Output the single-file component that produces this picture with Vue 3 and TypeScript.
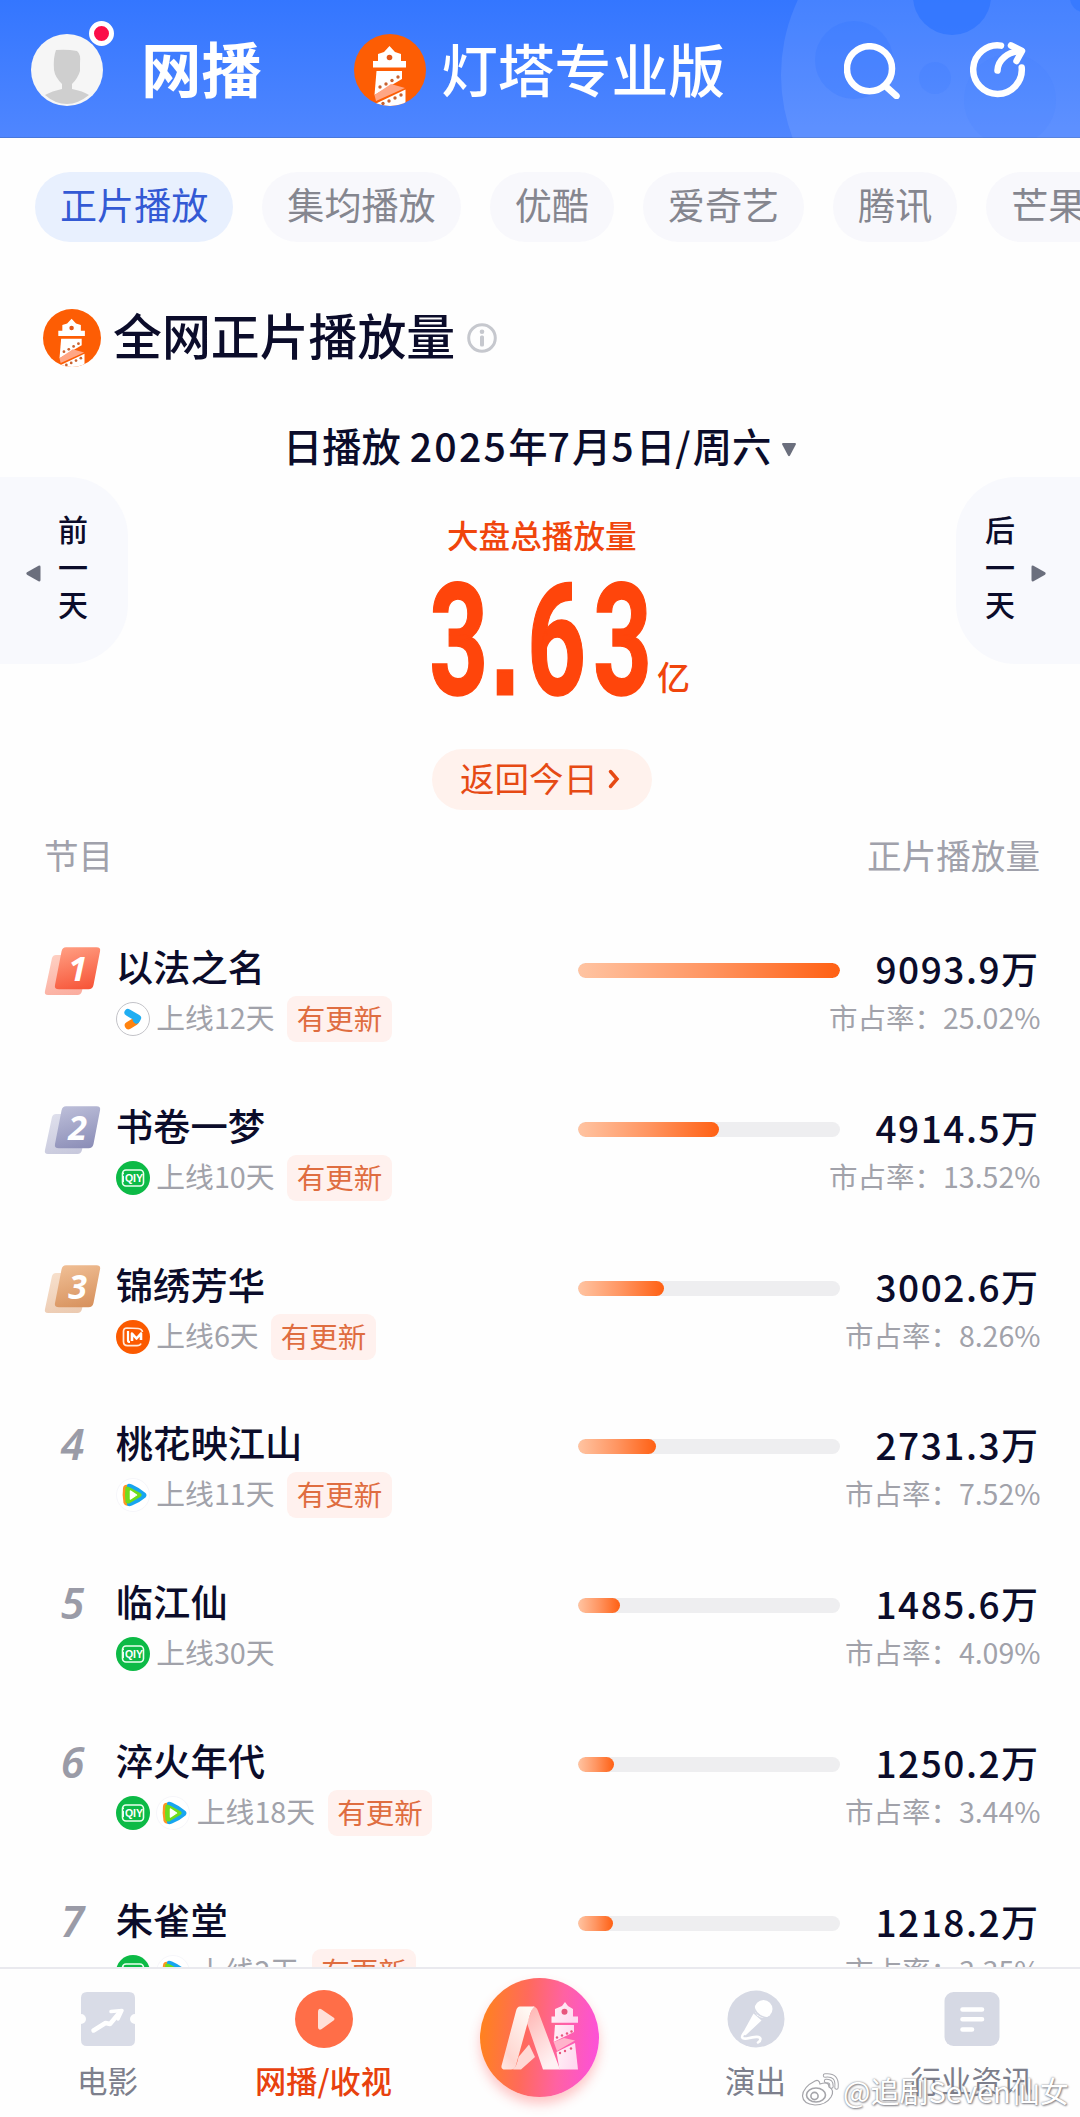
<script setup lang="ts">
import { ref, computed } from 'vue'

type Platform = 'youku' | 'iqiyi' | 'mango' | 'tencent'

interface Program {
  rank: number;
  name: string;
  platforms: Platform[];
  days: number;
  updated: boolean;
  plays: number;
  share: string;
}

const tabs = ['正片播放', '集均播放', '优酷', '爱奇艺', '腾讯', '芒果TV']
const activeTab = ref('正片播放')

const programs = ref<Program[]>([
  { rank: 1, name: '以法之名', platforms: ['youku'], days: 12, updated: true, plays: 9093.9, share: '25.02%' },
  { rank: 2, name: '书卷一梦', platforms: ['iqiyi'], days: 10, updated: true, plays: 4914.5, share: '13.52%' },
  { rank: 3, name: '锦绣芳华', platforms: ['mango'], days: 6, updated: true, plays: 3002.6, share: '8.26%' },
  { rank: 4, name: '桃花映江山', platforms: ['tencent'], days: 11, updated: true, plays: 2731.3, share: '7.52%' },
  { rank: 5, name: '临江仙', platforms: ['iqiyi'], days: 30, updated: false, plays: 1485.6, share: '4.09%' },
  { rank: 6, name: '淬火年代', platforms: ['iqiyi', 'tencent'], days: 18, updated: true, plays: 1250.2, share: '3.44%' },
  { rank: 7, name: '朱雀堂', platforms: ['iqiyi', 'tencent'], days: 2, updated: true, plays: 1218.2, share: '3.35%' },
])

const maxPlays = computed(() => Math.max(...programs.value.map((p) => p.plays)))

function getBarWidth(plays: number) {
  return (plays / maxPlays.value) * 100 + '%'
}

const medals = [
  { id: 1, from: '#ff9c80', to: '#f7573a' },
  { id: 2, from: '#bbbdd8', to: '#8d8fb8' },
  { id: 3, from: '#efbd93', to: '#d8935f' },
]
</script>

<template>
  <div class="page">
    <!-- Shared symbols -->
    <svg class="defs" width="0" height="0" aria-hidden="true">
      <defs>
        <clipPath id="logo-clip"><circle cx="36" cy="36" r="36" /></clipPath>
        <linearGradient v-for="m in medals" :id="'medal-' + m.id" :key="m.id" x1="0.3" y1="0" x2="0.6" y2="1">
          <stop offset="0" :stop-color="m.from" />
          <stop offset="1" :stop-color="m.to" />
        </linearGradient>
        <symbol id="lighthouse" viewBox="0 0 72 72">
          <g clip-path="url(#logo-clip)">
            <rect width="72" height="72" fill="#fd5d04" />
            <path d="M35.5 12 L41 18 L47 20 V27 H52 V33.500 H19 V27 H24 V20 L30 18 Z" fill="#fff" />
            <circle cx="35.500" cy="23.500" r="2.800" fill="#e2571a" />
            <path d="M22.500 37 H48 V45 L20.500 61 Z" fill="#fff" />
            <path d="M20.500 61 L37 50 L51 54 L22 67 Z" fill="#ffa685" />
            <path d="M51.500 55.500 V72 H20 L22 69.500 Z" fill="#fff" />
            <g fill="#c9622f">
              <circle cx="26" cy="53" r="1.700" /><circle cx="32" cy="50" r="1.700" />
              <circle cx="38" cy="46.500" r="1.700" /><circle cx="44" cy="43" r="1.700" />
              <circle cx="29" cy="69.500" r="1.700" /><circle cx="35" cy="67" r="1.700" />
              <circle cx="41" cy="64" r="1.700" /><circle cx="47" cy="61" r="1.700" />
            </g>
          </g>
        </symbol>
      </defs>
    </svg>

    <!-- Header -->
    <header class="top-bar">
      <svg class="top-deco" viewBox="0 0 300 138">
        <circle cx="177" cy="75" r="176" fill="#fff" opacity="0.09" />
        <g fill="#2f74ff">
          <circle cx="74" cy="60" r="39" opacity="0.25" />
          <circle cx="172" cy="-4" r="39" opacity="0.75" />
          <circle cx="155" cy="78" r="16" opacity="0.15" />
          <circle cx="230" cy="100" r="46" opacity="0.07" />
          <circle cx="304" cy="-2" r="14" opacity="0.6" />
        </g>
      </svg>
      <div class="avatar">
        <svg viewBox="0 0 72 72">
          <circle cx="36" cy="36" r="36" fill="#f6f6f6" />
          <path d="M25 16 Q36 15 46 17 Q50 20 49 29 L49 37 Q47 44 41 50 V55 Q52 57 58 61 Q47 70 36 70 Q24 70 14 61 Q21 57 31 55 V50 Q24 43 23 36 Q22 24 25 16 Z" fill="#cfcfcf" />
        </svg>
        <i class="avatar-dot"></i>
      </div>
      <h1 class="top-title">网播</h1>
      <svg class="brand-logo"><use href="#lighthouse" /></svg>
      <span class="brand-name">灯塔专业版</span>
      <svg class="top-icon icon-search" viewBox="0 0 56 56">
        <circle cx="25.500" cy="25.700" r="22.500" />
        <path d="M42.500 44 L52.500 53" />
      </svg>
      <svg class="top-icon icon-share" viewBox="0 0 56 56">
        <path d="M31 3.600 A24.300 24.300 0 1 0 51.700 25.500" />
        <path d="M27.500 28.500 C28 18 37 10 51 9" />
        <path d="M41 3.500 L52 9 L46.500 19" />
      </svg>
    </header>

    <!-- Tabs -->
    <nav class="tabs">
      <button v-for="tab in tabs" :key="tab" class="tab" :class="{ 'tab-active': tab === activeTab }" @click="activeTab = tab">{{ tab }}</button>
    </nav>

    <!-- Title -->
    <div class="section-title">
      <svg class="section-logo"><use href="#lighthouse" /></svg>
      <h2>全网正片播放量</h2>
      <svg class="info-icon" viewBox="0 0 30 30">
        <circle cx="15" cy="15" r="13.300" fill="none" stroke="#c6c8ce" stroke-width="3" />
        <circle cx="15" cy="8.800" r="2.300" fill="#c6c8ce" />
        <rect x="13" y="12.500" width="4" height="11" rx="1.500" fill="#c6c8ce" />
      </svg>
    </div>

    <div class="date-line">
      <span>日播放 <b>2025</b>年<b>7</b>月<b>5</b>日<b>/</b>周六</span>
      <svg class="date-arrow" viewBox="0 0 16 15"><path d="M2 1 H14 Q15.500 1 14.800 2.500 L9 13.500 Q8 15 7 13.500 L1.200 2.500 Q0.500 1 2 1 Z" /></svg>
    </div>

    <!-- Total -->
    <section class="stage">
      <button class="day-btn day-prev">
        <svg viewBox="0 0 15 17"><path d="M1 7.300 L12.500 0.800 Q14.500 0 14.500 2 V15 Q14.500 17 12.500 16.200 L1 9.700 Q-0.300 8.500 1 7.300 Z" /></svg>
        <span>前<br>一<br>天</span>
      </button>
      <div class="total">
        <div class="total-label">大盘总播放量</div>
        <div class="total-value">
          <svg class="total-number" width="222" height="130" viewBox="0 0 222 130">
            <text transform="scale(0.66 1)" y="120"><tspan x="-4">3</tspan><tspan x="89" class="dot">.</tspan><tspan x="144 244">63</tspan></text>
          </svg>
          <span>亿</span>
        </div>
        <button class="today-btn">
          返回今日
          <svg viewBox="0 0 12 20"><path d="M2.500 2.500 L9 10 L2.500 17.500" /></svg>
        </button>
      </div>
      <button class="day-btn day-next">
        <span>后<br>一<br>天</span>
        <svg viewBox="0 0 15 17"><path d="M14 7.300 L2.500 0.800 Q0.500 0 0.500 2 V15 Q0.500 17 2.500 16.200 L14 9.700 Q15.300 8.500 14 7.300 Z" /></svg>
      </button>
    </section>

    <!-- List -->
    <div class="list-head">
      <span>节目</span>
      <span>正片播放量</span>
    </div>
    <main class="list">
      <div v-for="p in programs" :key="p.rank" class="row">
        <div class="rank">
          <svg v-if="p.rank <= 3" viewBox="0 0 57 50">
            <path d="M12 9 H42 Q45 9 44.500 12 L38 45 Q37 49 33.500 49 H4 Q0 49 1 45 L8 12 Q9 9 12 9 Z" :fill="'url(#medal-' + p.rank + ')'" opacity="0.48" />
            <path d="M22 1.300 H52.500 Q57 1.300 56 5.500 L49.500 39 Q48.500 43.300 44.500 43.300 H15 Q10 43.300 11 39 L17.500 5.500 Q18.500 1.300 22 1.300 Z" :fill="'url(#medal-' + p.rank + ')'" />
            <text x="33.500" y="35" text-anchor="middle">{{ p.rank }}</text>
          </svg>
          <span v-else>{{ p.rank }}</span>
        </div>
        <div class="info">
          <div class="name">{{ p.name }}</div>
          <div class="meta">
            <template v-for="pf in p.platforms" :key="pf">
              <svg v-if="pf === 'youku'" class="platform" viewBox="0 0 34 34">
                <circle cx="17" cy="17" r="16.500" fill="#fff" stroke="#c3c3c8" />
                <path d="M12.500 23.500 L19 19.500" stroke="#ff8310" stroke-width="7.500" stroke-linecap="round" />
                <path d="M12 10.500 L21.500 16 L20.500 18" fill="none" stroke="#20aef2" stroke-width="7.200" stroke-linecap="round" stroke-linejoin="round" />
              </svg>
              <svg v-else-if="pf === 'iqiyi'" class="platform" viewBox="0 0 34 34">
                <circle cx="17" cy="17" r="17" fill="#0cba46" />
                <rect x="6.500" y="9" width="21" height="16" rx="3.500" fill="none" stroke="#e9ffee" stroke-width="1.600" />
                <text x="18" y="21.300" text-anchor="middle" class="iqiyi-text">QIY</text>
                <path d="M7 11.500 V13 M7 15 V21" stroke="#e9ffee" stroke-width="2" />
              </svg>
              <svg v-else-if="pf === 'mango'" class="platform" viewBox="0 0 34 34">
                <circle cx="17" cy="17" r="17" fill="#fb5a00" />
                <path d="M26.500 12 Q26 9 22 8.500 L11 8 Q7.500 8 7.500 11.500 V21.500 Q7.500 25.500 11.500 25.700 H21 Q24 25.700 25 23.500" fill="none" stroke="#ffe9da" stroke-width="1.700" />
                <path d="M12 11 V20.500 Q12 22 14 22" fill="none" stroke="#fff" stroke-width="2.200" />
                <path d="M16 21 V13.500 L20.500 18.500 L25 13.500 V20" fill="none" stroke="#fff" stroke-width="2.600" stroke-linejoin="round" />
              </svg>
              <svg v-else class="platform" viewBox="0 0 34 34">
                <circle cx="17" cy="17" r="16.500" fill="#fff" stroke="#f6f6fa" />
                <path d="M7 10 Q8 6 12 7 L14 27 Q9 29 7.500 25 Q6 17 7 10 Z" fill="#ff9420" />
                <path d="M11 7 Q12 5 16 6.500 Q24 10 29.500 15 Q31.500 17 29.500 19.500 Q23 25 16 27.500 Q12 29 11 27 Z" fill="#17a5f0" />
                <path d="M9.500 9 Q11 7.500 15 10 L25 15.500 Q26.500 17 25 18.500 L14 25 Q10.500 26.500 9.500 24 Q8.500 17 9.500 9 Z" fill="#6fdc1c" />
                <path d="M14.500 13 L20.500 17 L14.500 21 Z" fill="#fff" stroke="#fff" stroke-width="1.500" stroke-linejoin="round" />
              </svg>
            </template>
            <span class="days">上线{{ p.days }}天</span>
            <span v-if="p.updated" class="badge">有更新</span>
          </div>
        </div>
        <div class="bar"><div class="bar-fill" :style="{ width: getBarWidth(p.plays) }"></div></div>
        <div class="stats">
          <div class="plays"><b>{{ p.plays.toFixed(1) }}</b>万</div>
          <div class="share">市占率：{{ p.share }}</div>
        </div>
      </div>
    </main>

    <!-- Bottom nav -->
    <footer class="nav">
      <div class="nav-item">
        <svg viewBox="0 0 58 58">
          <path d="M8 2 H50 Q56 2 56 8 V24 A5 5 0 0 0 56 34 V50 Q56 56 50 56 H8 Q2 56 2 50 V34 A5 5 0 0 0 2 24 V8 Q2 2 8 2 Z" fill="#d9dce7" />
          <path d="M14.500 40.500 L26.500 33 L31 34 L41 22" class="nav-stroke" stroke-width="4.500" />
          <path d="M32 21.500 L43 20.500 L39 29" class="nav-stroke" stroke-width="3.500" />
        </svg>
        <span>电影</span>
      </div>
      <div class="nav-item nav-active">
        <svg viewBox="0 0 58 58">
          <circle cx="29" cy="29" r="29" fill="#ff6e48" />
          <path d="M25.500 20.500 L38 29 L25.500 38 Q24.500 38.500 24.500 37 V22 Q24.500 20 25.500 20.500 Z" fill="#ffe0d8" stroke="#ffe0d8" stroke-width="3" stroke-linejoin="round" />
        </svg>
        <span>网播/收视</span>
      </div>
      <div class="nav-item nav-ai">
        <div class="ai-btn">
          <svg viewBox="0 0 119 119">
            <defs>
              <linearGradient id="ai-left" x1="0" y1="1" x2="0.7" y2="0">
                <stop offset="0" stop-color="#ffe9e4" /><stop offset="0.25" stop-color="#ffd6d0" /><stop offset="1" stop-color="#fff8f3" />
              </linearGradient>
              <linearGradient id="ai-right" x1="0" y1="0" x2="0.5" y2="1">
                <stop offset="0" stop-color="#ffb3b0" /><stop offset="1" stop-color="#fff2f3" />
              </linearGradient>
              <linearGradient id="ai-tower" x1="0" y1="0" x2="1" y2="0.3">
                <stop offset="0" stop-color="#fff2f6" /><stop offset="1" stop-color="#ffd9f0" />
              </linearGradient>
            </defs>
            <path d="M53 28.500 Q56.500 28.500 58 33 L80 91.500 H63 L47 45 Z" fill="url(#ai-right)" />
            <path d="M40 28.500 H54.500 Q51.500 31 49.500 38 L36 87 Q35 91.500 31 91.500 H25 Q20 91.500 22 86 L36 33 Q37 28.500 40 28.500 Z" fill="url(#ai-left)" />
            <path d="M49 66.500 L55 79 L41 91.500 H33 Q37 88 38.500 79 Z" fill="#ffd8d4" />
            <path d="M85 24 L88 28 L93 31 V38.500 H98 V44.700 H71.500 V38.500 H75 V31 L82 28 Z" fill="url(#ai-tower)" />
            <circle cx="84.500" cy="33.700" r="3" fill="#e8567e" />
            <path d="M75 47 H94 V54 L73.700 64 Z" fill="url(#ai-tower)" />
            <path d="M73.700 64 L84 60 L95 62.500 L77 73 Z" fill="#ffb3cb" />
            <path d="M76.500 74 L95 65 L98 91.500 H79.500 Z" fill="url(#ai-tower)" />
            <g fill="#e8567e">
              <circle cx="77" cy="59.500" r="1.200" /><circle cx="82" cy="57.500" r="1.200" /><circle cx="87" cy="55.500" r="1.200" /><circle cx="91.500" cy="53.500" r="1.200" />
              <circle cx="80" cy="75" r="1.200" /><circle cx="85" cy="73" r="1.200" /><circle cx="91" cy="70.500" r="1.200" />
            </g>
          </svg>
        </div>
      </div>
      <div class="nav-item">
        <svg viewBox="0 0 58 58">
          <circle cx="29" cy="29" r="28.500" fill="#d6d9e4" />
          <circle cx="36.500" cy="19" r="9" fill="#fff" />
          <path d="M26.500 23.500 L34.500 30.500 L19 45 Q17 46 15.500 43.500 Z" fill="#fff" />
          <path d="M26.500 15.500 Q28.500 27 41.500 28" fill="none" stroke="#d6d9e4" stroke-width="1.600" />
          <path d="M17 43 Q12 49.500 20 48.500 Q33 45 33.500 49 Q33.500 51 31 52.500" class="nav-stroke" stroke-width="2.600" />
        </svg>
        <span>演出</span>
      </div>
      <div class="nav-item">
        <svg viewBox="0 0 58 58">
          <rect x="1.500" y="2" width="55" height="54" rx="9" fill="#d6d9e4" />
          <path d="M19.500 19.500 H39 M19.500 29.300 H39 M19.500 39.500 H29" class="nav-stroke" stroke-width="4.600" />
        </svg>
        <span>行业资讯</span>
      </div>
    </footer>

    <!-- Watermark -->
    <div class="watermark">
      <svg viewBox="0 0 40 36">
        <path d="M15 9 Q19 7 20 12 Q29 9 29 15 Q35 18 31 25 Q26 33 15 33 Q3 32 2.500 24 Q3 15 15 9 Z" fill="#fff" stroke="#a5a5aa" stroke-width="1.200" />
        <ellipse cx="16" cy="23" rx="9.500" ry="7" fill="none" stroke="#a5a5aa" stroke-width="1.600" />
        <circle cx="14.500" cy="24" r="3.600" fill="none" stroke="#a5a5aa" stroke-width="1.600" />
        <path d="M25 3.500 Q38 2 36.500 15.500 M26 9 Q32 8.500 31.500 14.500" fill="none" stroke="#a5a5aa" stroke-width="4.400" stroke-linecap="round" />
        <path d="M25 3.500 Q38 2 36.500 15.500 M26 9 Q32 8.500 31.500 14.500" fill="none" stroke="#fff" stroke-width="2.400" stroke-linecap="round" />
      </svg>
      <span>@追剧Seven仙女</span>
    </div>
  </div>
</template>

<style>
body { margin: 0; background: #fefefe; }
</style>

<style scoped>
.page {
  position: relative; width: 1080px; height: 2117px; overflow: hidden;
  display: flex; flex-direction: column; background: #fefefe; color: #0b0c2a;
  font-family: "Noto Sans CJK SC", "Noto Sans", sans-serif;
}
.defs { position: absolute; }
button { border: none; padding: 0; font-family: inherit; color: inherit; cursor: pointer; }
h1, h2 { margin: 0; }
svg { display: block; flex-shrink: 0; }

/* Header */
.top-bar {
  position: relative; height: 138px; flex-shrink: 0; box-sizing: border-box;
  display: flex; align-items: center; padding: 2px 0 0 31px; color: #fff;
  background: linear-gradient(#3476ff, #4f86ff); border-bottom: 1px solid #4878dc;
}
.top-deco { position: absolute; right: 0; top: 0; width: 300px; height: 138px; }
.avatar { position: relative; width: 72px; height: 72px; margin-right: 38px; }
.avatar svg { width: 72px; height: 72px; }
.avatar-dot {
  position: absolute; left: 58px; top: -13px; width: 15px; height: 15px;
  background: #fb0d48; border: 5px solid #fff; border-radius: 50%;
}
.top-title { width: 121px; margin: -5px 92px 0 0; font-size: 60.500px; line-height: 72px; font-weight: 700; white-space: nowrap; }
.brand-logo { width: 72px; height: 72px; margin-right: 15px; }
.brand-name { width: 284px; margin-top: -6px; font-size: 56.800px; line-height: 72px; font-weight: 500; white-space: nowrap; }
.top-icon {
  position: relative; width: 56px; height: 56px; fill: none; stroke: #fff;
  stroke-width: 6.500; stroke-linecap: round; stroke-linejoin: round;
}
.icon-search { margin: 2px 0 0 119px; }
.icon-share { margin: 1px 0 0 70px; }

/* Tabs */
.tabs { display: flex; gap: 29px; padding: 34px 0 0 35px; flex-shrink: 0; }
.tab {
  flex-shrink: 0; height: 70px; padding: 0 25px 6px; border-radius: 35px; white-space: nowrap;
  background: #f8f8fc; color: #85868f; font-size: 37.100px; line-height: 64px;
}
.tab-active { background: #e8f0fe; color: #3359d4; }

/* Title */
.section-title { display: flex; align-items: center; height: 58px; margin-top: 67px; padding-left: 43px; flex-shrink: 0; }
.section-logo { width: 58px; height: 58px; }
.section-title h2 { margin: -9px 12px 0 12px; font-size: 48.900px; line-height: 58px; font-weight: 500; }
.info-icon { width: 30px; height: 30px; margin-top: -1px; }
.date-line {
  display: flex; align-items: center; height: 60px; margin-top: 48px; padding-left: 283px; flex-shrink: 0;
  font-size: 39.300px; line-height: 60px; font-weight: 500; white-space: nowrap;
}
.date-line b { font-weight: 500; letter-spacing: 2.200px; }
.date-arrow { width: 16px; height: 15px; margin: 8px 0 0 10px; fill: #6b6f7d; }

/* Total */
.stage { display: flex; align-items: flex-start; height: 334px; margin-top: 2px; flex-shrink: 0; }
.day-btn {
  display: flex; align-items: center; box-sizing: border-box; height: 187px; background: #f8f9fd;
  font-size: 30px; line-height: 37.500px; font-weight: 500; padding-bottom: 8px;
}
.day-btn svg { width: 15px; height: 17px; margin-top: 13px; fill: #6b6f7d; }
.day-prev { width: 128px; gap: 17px; padding-left: 26px; border-radius: 0 60px 60px 0; }
.day-next { width: 124px; gap: 16px; padding-left: 29px; border-radius: 60px 0 0 60px; }
.total { flex: 1; padding: 35px 0 0 282px; color: #f0450c; }
.total-label { padding-left: 37px; font-size: 31.600px; line-height: 44px; font-weight: 500; white-space: nowrap; }
.total-value { display: flex; align-items: flex-end; margin-top: 18px; padding-left: 22px; }
.total-value span { font-size: 33px; line-height: 40px; margin: 0 0 8px 3px; font-weight: 500; }
.total-number text {
  font-family: Roboto, "Liberation Sans", sans-serif; font-weight: 700; font-size: 156px;
  fill: #ff450b; stroke: #ff450b; stroke-width: 1.500;
}
.total-number .dot { font-family: "Liberation Sans", sans-serif; stroke-width: 3; }
.today-btn {
  display: flex; align-items: center; gap: 10px; box-sizing: border-box; width: 220px; height: 61px;
  margin: 45px 0 0 22px; padding: 0 0 5px 28px; border-radius: 31px; background: #fff2ed; color: #e64a14; font-size: 34.500px;
}
.today-btn svg { width: 12px; height: 20px; margin-top: 3px; fill: none; stroke: #e64a14; stroke-width: 3.500; stroke-linecap: round; }

/* List */
.list-head {
  display: flex; justify-content: space-between; height: 40px; margin-top: 23px; padding: 0 40px 0 44px;
  flex-shrink: 0; font-size: 34.600px; line-height: 40px; color: #a0a1ab;
}
.list { flex: 1; min-height: 0; overflow: hidden; }
.row {
  display: grid; grid-template-columns: 57px 476.500px 262.500px minmax(0, 1fr); height: 158.800px;
  box-sizing: border-box; padding: 72px 41px 0 44px;
}
.rank { font-family: "Noto Sans", "Open Sans", sans-serif; font-weight: 600; font-style: italic; }
.rank svg { width: 57px; height: 50px; }
.rank svg text { font-size: 34px; font-weight: 700; fill: #fff; }
.rank span { display: block; text-align: center; font-size: 43px; line-height: 44px; color: #9a9ba7; }
.info { padding-left: 14.800px; }
.name { font-size: 37.300px; line-height: 42px; font-weight: 500; margin-top: -1px; }
.meta { display: flex; align-items: center; height: 46px; margin-top: 9px; gap: 6.500px; }
.platform { width: 34px; height: 34px; }
.iqiyi-text { font-family: "Liberation Sans", sans-serif; font-weight: 700; font-size: 10.500px; fill: #fff; }
.days { font-size: 28.800px; line-height: 40px; color: #a1a2aa; margin-top: -4px; }
.badge {
  margin-left: 6px; padding: 0 9.500px; height: 46px; border-radius: 9px; box-sizing: border-box;
  background: #fff1ee; color: #df6d40; font-size: 28.500px; line-height: 43px;
}
.bar { height: 15px; margin-top: 17px; border-radius: 8px; background: #eeeef0; overflow: hidden; }
.bar-fill { height: 100%; border-radius: 8px; background: linear-gradient(90deg, #ffc4a2, #ff9561 50%, #ff6013); }
.stats { display: flex; flex-direction: column; align-items: flex-end; white-space: nowrap; }
.plays { font-size: 37px; line-height: 44px; font-weight: 500; margin-right: 1px; }
.plays b { font-weight: 500; letter-spacing: 1.500px; }
.share { font-size: 28.500px; line-height: 40px; margin: 7px -1.500px 0 0; color: #a1a2aa; }

/* Bottom nav */
.nav {
  display: flex; height: 150px; flex-shrink: 0; box-sizing: border-box;
  border-top: 2px solid #e9e9ee; background: #fefefe;
}
.nav-item {
  width: 216px; display: flex; flex-direction: column; align-items: center; box-sizing: border-box;
  padding: 21px 1px 0 0; font-size: 30.500px; line-height: 40px; color: #7d7f8c; white-space: nowrap;
}
.nav-item svg { width: 58px; height: 58px; }
.nav-item span { margin-top: 12px; }
.nav-active { color: #e8410e; font-weight: 500; font-size: 31.200px; }
.nav-stroke { fill: none; stroke: #fff; stroke-linecap: round; stroke-linejoin: round; }
.nav-ai { padding-top: 9px; }
.ai-btn {
  width: 119px; height: 119px; border-radius: 50%; box-shadow: 0 7px 12px rgba(255, 70, 70, 0.3);
  background: linear-gradient(95deg, #ff8120 5%, #ff6a5c 38%, #ff62a2 66%, #fc50dc 98%);
}
.ai-btn svg { width: 119px; height: 119px; }

/* Watermark */
.watermark {
  position: absolute; left: 800px; top: 2070px; display: flex; align-items: center; gap: 3px;
  color: #fff; font-size: 29px; line-height: 40px; white-space: nowrap;
  text-shadow: 0 0 2px #77777d, 1px 1px 2px #85858c;
}
.watermark svg { width: 40px; height: 36px; }
</style>
